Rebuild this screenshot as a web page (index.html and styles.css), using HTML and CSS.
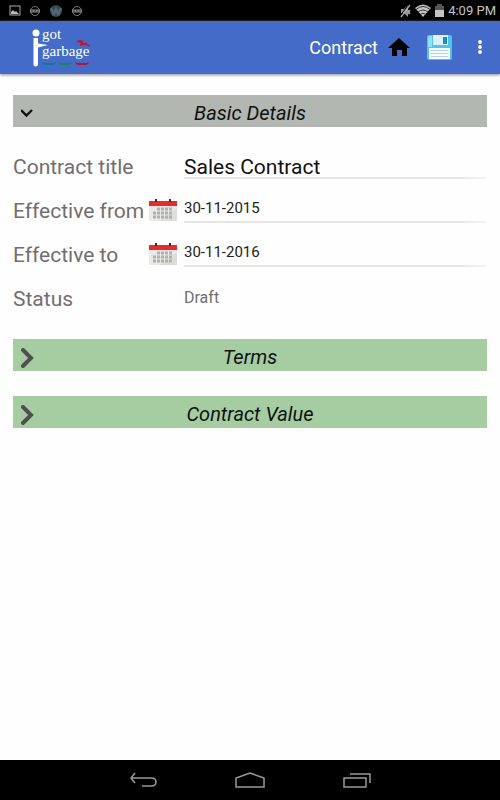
FILE: index.html
```html
<!DOCTYPE html>
<html lang="en">
<head>
<meta charset="utf-8">
<meta name="viewport" content="width=device-width, initial-scale=1">
<title>Contract</title>
<link rel="stylesheet" href="styles.css">
</head>
<body>
<div class="statusbar">
  <div class="notices">
    <svg width="12" height="12" viewBox="0 0 12 12" aria-hidden="true"><rect x="1" y="1" width="10" height="9" fill="none" stroke="#aaa"/><path d="M2 9V7l2-2 2 2 1-1 3 3z" fill="#bbb"/></svg>
    <svg width="12" height="12" viewBox="0 0 12 12" aria-hidden="true"><circle cx="6" cy="6" r="4.500" fill="none" stroke="#777"/><path d="M1 6h10" stroke="#888" stroke-width="3"/><path d="M2 6h8" stroke="#333" stroke-dasharray="2 1"/></svg>
    <svg width="14" height="14" viewBox="0 0 14 14" aria-hidden="true"><circle cx="7" cy="7" r="6" fill="#444"/><path d="M2 4l3 6 2-5 2 5 3-6" fill="none" stroke="#47717f" stroke-width="2"/></svg>
    <svg width="12" height="12" viewBox="0 0 12 12" aria-hidden="true"><circle cx="6" cy="6" r="4.500" fill="none" stroke="#777"/><path d="M1 6h10" stroke="#888" stroke-width="3"/><path d="M2 6h8" stroke="#333" stroke-dasharray="2 1"/></svg>
  </div>
  <div class="system">
    <svg width="12" height="14" viewBox="0 0 12 14" aria-hidden="true"><path d="M2 5h3l4-4v12L5 9H2z" fill="#999"/><path d="M1 12L10 0" stroke="#000"/><path d="M2 13L11 1M9 6l2 4M11 6L9 10" stroke="#aaa" stroke-width="1.300" fill="none"/></svg>
    <svg width="16" height="13" viewBox="0 0 16 13" aria-hidden="true"><path d="M0 4Q8-3 16 4L8 13z" fill="#c4c4c4"/><path d="M1 5.500Q8-.5 15 5.500M3 8q5-4 10 0M5 10.500q3-2.500 6 0" fill="none" stroke="#333"/></svg>
    <svg width="9" height="13" viewBox="0 0 9 13" aria-hidden="true"><path d="M0 2h2V0h5v2h2v4H0z" fill="#555"/><path d="M0 6h9v7H0z" fill="#c4c4c4"/></svg>
    <span class="clock">4:09 PM</span>
  </div>
</div>

<header class="appbar">
  <svg class="logo" width="60" height="46" viewBox="0 -3 60 46" role="img" aria-label="i got garbage">
    <circle cx="4" cy="5" r="3.500" fill="#fff"/>
    <path d="M1.500 10h4.500v5.500l10 1.500-10 2.500v17q0 2-2.300 2t-2.200-2z" fill="#fff"/>
    <text class="logo-text" x="10" y="11">got</text>
    <text class="logo-text" x="10" y="28">garbage</text>
    <path d="M45 13l13 5M47 12.500l4 1M48 17l7-1.500" fill="none" stroke="#b51c35" stroke-width="1.800"/>
    <path d="M10 34l3 1h8l3-1q-1 3-3 3h-8q-2 0-3-3z" fill="#0f75a0"/>
    <path d="M26 34l3 1h8l3-1q-1 3-3 3h-8q-2 0-3-3z" fill="#18884a"/>
    <path d="M43 34l3 1h8l3-1q-1 3-3 3h-8q-2 0-3-3z" fill="#bd0e2d"/>
  </svg>
  <h1 class="title">Contract</h1>
  <button class="action" type="button" aria-label="Home">
    <svg width="22" height="20" viewBox="0 0 22 20"><path d="M11 0l11 10h-3v8h-5v-6H9v6H4v-8H0L5 5.500z"/></svg>
  </button>
  <button class="action save" type="button" aria-label="Save">
    <svg width="25" height="26" viewBox="0 0 25 26"><path d="M2 0h21q2 0 2 2v21q0 2-2 2H2q-2 0-2-2V2q0-2 2-2z" fill="#4fc3ea"/><path d="M1 3l1-2h3v11H1z" fill="#8ee0f6"/><path d="M6 0h15v10H6z" fill="#dff1f8"/><path d="M16 2h4v7h-4z" fill="#168fc4"/><path d="M2 13h21v11H2z" fill="#f5fafc"/><path d="M4 15.500h17M4 18.500h17M4 21.500h17" stroke="#b9d3de"/></svg>
  </button>
  <button class="action" type="button" aria-label="More options">
    <svg width="4" height="16" viewBox="0 0 4 16" fill="#fff"><circle cx="2" cy="2" r="1.900"/><circle cx="2" cy="7" r="1.900"/><circle cx="2" cy="12" r="1.900"/></svg>
  </button>
</header>

<main class="content">
  <button class="section open" type="button" aria-expanded="true">
    <svg width="13" height="10" viewBox="0 0 13 10"><path d="M0 1l5.500 5.500L11 1" fill="none" stroke="#111" stroke-width="2.400"/></svg>
    <span>Basic Details</span>
  </button>
  <form class="details">
    <div class="row">
      <label for="title">Contract title</label>
      <input class="name" id="title" type="text" value="Sales Contract">
    </div>
    <div class="row">
      <label for="from">Effective from</label>
      <svg class="calendar" width="28" height="23" viewBox="0 0 28 23" aria-hidden="true"><path d="M0 6h28v16H0z" fill="#e9e9e7"/><path d="M10 22L28 9v13z" fill="#dcdcda"/><path d="M0 2h28v5H0z" fill="#e52c2b"/><path d="M7 0v3M21 0v3" stroke="#333" stroke-width="2"/><path d="M8 10h16" stroke="#b0b0ae" stroke-width="3" stroke-dasharray="3 1"/><path d="M4 14h20M4 18h20" stroke="#b0b0ae" stroke-width="3" stroke-dasharray="3 1"/></svg>
      <input id="from" type="text" value="30-11-2015">
    </div>
    <div class="row">
      <label for="to">Effective to</label>
      <svg class="calendar" width="28" height="23" viewBox="0 0 28 23" aria-hidden="true"><path d="M0 6h28v16H0z" fill="#e9e9e7"/><path d="M10 22L28 9v13z" fill="#dcdcda"/><path d="M0 2h28v5H0z" fill="#e52c2b"/><path d="M7 0v3M21 0v3" stroke="#333" stroke-width="2"/><path d="M8 10h16" stroke="#b0b0ae" stroke-width="3" stroke-dasharray="3 1"/><path d="M4 14h20M4 18h20" stroke="#b0b0ae" stroke-width="3" stroke-dasharray="3 1"/></svg>
      <input id="to" type="text" value="30-11-2016">
    </div>
    <div class="row">
      <label for="status">Status</label>
      <output class="status" id="status">Draft</output>
    </div>
  </form>
  <button class="section" type="button" aria-expanded="false">
    <svg width="13" height="20" viewBox="0 0 13 20"><path d="M2 2l8 8-8 8" fill="none" stroke="#505050" stroke-width="4" stroke-linecap="round"/></svg>
    <span>Terms</span>
  </button>
  <button class="section" type="button" aria-expanded="false">
    <svg width="13" height="20" viewBox="0 0 13 20"><path d="M2 2l8 8-8 8" fill="none" stroke="#505050" stroke-width="4" stroke-linecap="round"/></svg>
    <span>Contract Value</span>
  </button>
</main>

<nav class="navbar" aria-label="System navigation">
  <button type="button" aria-label="Back"><svg width="28" height="16" viewBox="0 0 28 16"><path d="M6 1L2 6l4 5M2 6h20q5 0 5 4t-5 4H13" fill="none" stroke="#999" stroke-width="1.500"/></svg></button>
  <button type="button" aria-label="Home"><svg width="30" height="16" viewBox="0 0 30 16"><path d="M1 15V6l14-5 14 5v9z" fill="none" stroke="#999" stroke-width="1.500"/></svg></button>
  <button type="button" aria-label="Recent apps"><svg width="28" height="16" viewBox="0 0 28 16"><path d="M1 6h22v9H1zM7 2h20v9" fill="none" stroke="#999" stroke-width="1.500"/></svg></button>
</nav>
</body>
</html>
```
FILE: styles.css
```css
* {
  box-sizing: border-box;
}

body {
  margin: 0;
  min-height: 100vh;
  display: flex;
  flex-direction: column;
  background: #fefefe;
  color: #111;
  font-family: Roboto, "Liberation Sans", sans-serif;
}

button {
  padding: 0;
  border: 0;
  background: none;
  font: inherit;
  color: inherit;
}

svg {
  display: block;
  flex: none;
}

.statusbar {
  display: flex;
  align-items: center;
  justify-content: space-between;
  height: 21px;
  padding: 0 4px 0 9px;
  background: #000;
}

.notices {
  display: flex;
  align-items: center;
  gap: 8px;
}

.system {
  display: flex;
  align-items: center;
  gap: 4px;
}

.clock {
  color: #c4c4c4;
  font-size: 13px;
  line-height: 20px;
}

.appbar {
  display: flex;
  align-items: center;
  height: 53px;
  padding: 0 18px 0 32px;
  background: #446bc8;
  box-shadow: 0 1px 3px #888;
}

.logo-text {
  fill: #fff;
  font-family: "Liberation Serif", serif;
  font-size: 15px;
}

.title {
  margin: 0 10px 0 auto;
  color: #fff;
  font-size: 18px;
  font-weight: 400;
}

.save {
  margin: 0 26px 0 17px;
}

.content {
  flex: 1;
  padding: 21px 13px;
}

.section {
  display: grid;
  grid-template-columns: 16px 1fr 16px;
  align-items: center;
  width: 100%;
  height: 32px;
  margin-bottom: 25px;
  padding: 5px 8px 0;
  background: #a5cda1;
  font-size: 20px;
  font-style: italic;
  line-height: 27px;
}

.section.open {
  margin: 0;
  background: #b2b7b2;
}

.details {
  padding: 18px 0;
}

.row {
  display: grid;
  grid-template-columns: 136px 35px 1fr;
  height: 44px;
}

.row label {
  grid-column: 1;
  color: #736d6f;
  font-size: 21px;
  line-height: 44px;
  white-space: nowrap;
}

.calendar {
  margin-top: 10px;
}

.row input,
.status {
  grid-column: 3;
  width: 100%;
  height: 34px;
  padding: 5px 0 0;
  border: 0;
  font: inherit;
  font-size: 15px;
}

.row input {
  border-bottom: 2px solid;
  border-image: linear-gradient(to right, #e6e6e6 90%, #f6f6f6) 1;
  background: none;
  color: #222;
}

.row .name {
  padding-top: 11px;
  font-size: 21px;
  color: #111;
}

.status {
  color: #707070;
  font-size: 16px;
  line-height: 32px;
}

.navbar {
  display: flex;
  align-items: center;
  justify-content: center;
  gap: 78px;
  height: 40px;
  background: #000;
}
```
